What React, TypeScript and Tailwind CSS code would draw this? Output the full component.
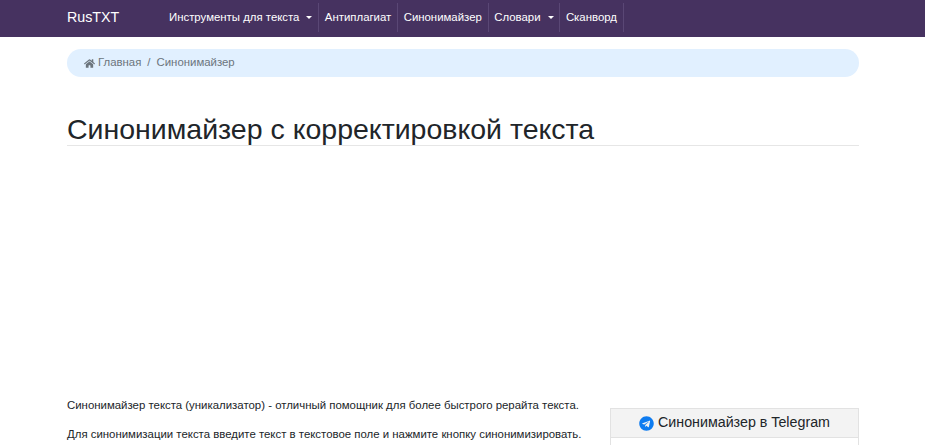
import { FaHome, FaTelegram } from "react-icons/fa";

const Caret = () => (
  <span className="ml-[7px] inline-block align-[2px] border-x-[3.5px] border-t-[3.5px] border-x-transparent border-t-white" />
);

const NavItem = ({ label, caret }: { label: string; caret?: boolean }) => (
  <a className="flex items-center h-[29px] px-[5.7px] border-r border-[#5a4775] text-[11.4px] text-white whitespace-nowrap">
    {label}
    {caret && <Caret />}
  </a>
);

const App = () => {
  return (
    <div className="h-screen w-screen overflow-hidden bg-white text-[#212529] font-['Liberation_Sans',Arial,sans-serif]">
      {/* Navbar */}
      <nav className="h-[37px] bg-[#463260] flex items-start pl-[67px] pt-[3px]">
        <a className="w-[96.3px] h-[29px] flex items-center text-[14.25px] text-white">RusTXT</a>
        <NavItem label="Инструменты для текста" caret />
        <NavItem label="Антиплагиат" />
        <NavItem label="Синонимайзер" />
        <NavItem label="Словари" caret />
        <NavItem label="Сканворд" />
      </nav>

      <div className="mx-[67px] w-[792px]">
        {/* Breadcrumb */}
        <div className="mt-3 h-[28px] rounded-[14px] bg-[#e1f0ff] flex items-center px-[17px] text-[11.4px] text-[#6c757d]">
          <FaHome className="mr-[3px] text-[11px]" />
          <span>Главная</span>
          <span className="px-[6px]">/</span>
          <span>Синонимайзер</span>
        </div>

        <h1 className="mt-[34px] h-[34px] border-b border-[#e6e6e6] text-[28.5px] leading-[36px] text-[#212529] box-content">
          Синонимайзер с корректировкой текста
        </h1>

        {/* Content */}
        <div className="mt-[251px] flex justify-between items-start">
          <div className="text-[11.42px] leading-[17px] text-[#212529]">
            <p>Синонимайзер текста (уникализатор) - отличный помощник для более быстрого рерайта текста.</p>
            <p className="mt-[12px]">Для синонимизации текста введите текст в текстовое поле и нажмите кнопку синонимизировать.</p>
          </div>
          <aside className="mt-[11px] w-[249px] shrink-0 border border-[#e2e2e2]">
            <div className="h-[29px] bg-[#f3f3f3] border-b border-[#e2e2e2] flex items-center justify-center text-[14.25px] text-[#212529]">
              <FaTelegram className="mr-[4px] text-[15px] text-[#0f7cf0]" />
              Синонимайзер в Telegram
            </div>
            <div className="h-[40px]" />
          </aside>
        </div>
      </div>
    </div>
  );
};

export default App;
